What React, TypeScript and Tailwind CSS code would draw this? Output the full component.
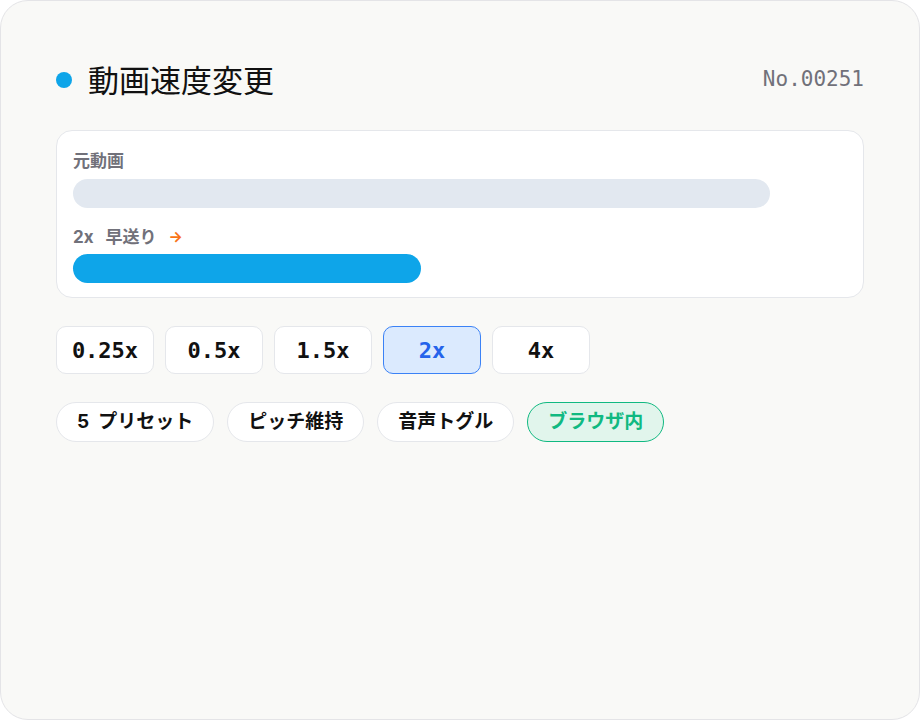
const SPEEDS = ['0.25x', '0.5x', '1.5x', '2x', '4x']
const TAGS = ['5\u00a0\u00a0プリセット', 'ピッチ維持', '音声トグル', 'ブラウザ内']

const JP = { fontFamily: 'Inter, "Noto Sans CJK JP", sans-serif' }
const MONO = { fontFamily: '"DejaVu Sans Mono", "Liberation Mono", monospace' }

export default function App() {
  const active = '2x'
  return (
    <div className="w-[920px] h-[720px] bg-white">
      <div className="w-full h-full rounded-[28px] border border-[#e4e4e7] bg-[#f9f9f7] px-[55px] pt-[58px]" style={JP}>
        {/* header */}
        <div className="flex items-center justify-between h-[42px]">
          <div className="flex items-center gap-4">
            <span className="w-4 h-4 rounded-full bg-[#0ea5e9]" />
            <span className="text-[31px] text-[#111] leading-none">動画速度変更</span>
          </div>
          <span className="text-[21px] text-[#71717a]" style={MONO}>No.00251</span>
        </div>

        {/* speed comparison */}
        <div className="mt-[29px] rounded-2xl border border-[#e5e7eb] bg-white px-4 pt-[18px] pb-[14px]">
          <div className="text-[17px] font-bold text-[#71717a] leading-6">元動画</div>
          <div className="mt-[6px] h-[29px] w-[90%] rounded-full bg-[#e2e8f0]" />
          <div className="mt-[17px] flex items-center text-[17px] font-bold text-[#71717a] leading-6">
            <span>2x</span>
            <span className="ml-3">早送り</span>
            <span className="ml-3 text-[#f97316] text-[15px] font-bold">→</span>
          </div>
          <div className="mt-[5px] h-[29px] w-[45%] rounded-full bg-[#0ea5e9]" />
        </div>

        {/* speed buttons */}
        <div className="mt-7 flex gap-[11px]">
          {SPEEDS.map(s => (
            <div key={s}
              className={
                s === active
                  ? 'w-[98px] h-12 rounded-[10px] border border-[#3b82f6] bg-[#dbeafe] text-[#2563eb] flex items-center justify-center text-[22px] font-bold'
                  : 'w-[98px] h-12 rounded-[10px] border border-[#e5e7eb] bg-white text-[#111] flex items-center justify-center text-[22px] font-bold'
              }
              style={MONO}>
              {s}
            </div>
          ))}
        </div>

        {/* feature chips */}
        <div className="mt-7 flex gap-[13px]">
          {TAGS.map((t, i) => (
            <div key={t}
              className={
                i === TAGS.length - 1
                  ? 'h-10 px-5 rounded-full border border-[#10b981] bg-[#e1f5ec] text-[#10b981] flex items-center text-[19px] font-bold'
                  : 'h-10 px-5 rounded-full border border-[#e5e7eb] bg-white text-[#111] flex items-center text-[19px] font-bold'
              }>
              {t}
            </div>
          ))}
        </div>
      </div>
    </div>
  )
}
